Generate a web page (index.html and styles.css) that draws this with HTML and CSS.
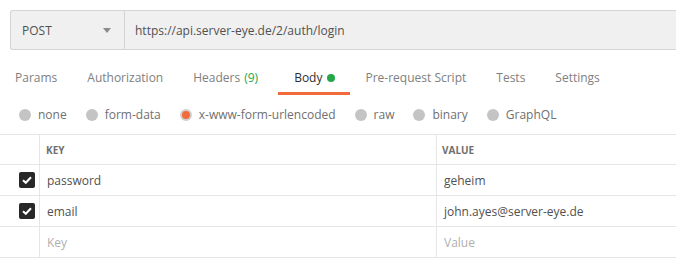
FILE: index.html
```
<!DOCTYPE html>
<html>
<head>
<meta charset="utf-8">
<link rel="stylesheet" href="styles.css">
</head>
<body>
<div class="page">
  <div class="urlbar">
    <div class="method">
      <span class="method-name">POST</span>
      <svg class="caret" width="8" height="5" viewBox="0 0 8 5"><path d="M0 0H8L4 5Z" fill="#8a8a8a"/></svg>
    </div>
    <div class="url">https://api.server-eye.de/2/auth/login</div>
  </div>

  <div class="tabs">
    <div class="tab">Params</div>
    <div class="tab">Authorization</div>
    <div class="tab">Headers <span class="count">(9)</span></div>
    <div class="tab active">Body <span class="dot"></span></div>
    <div class="tab">Pre-request Script</div>
    <div class="tab">Tests</div>
    <div class="tab">Settings</div>
  </div>

  <div class="radios">
    <div class="radio"><span class="circle"></span>none</div>
    <div class="radio"><span class="circle"></span>form-data</div>
    <div class="radio"><span class="circle checked"></span>x-www-form-urlencoded</div>
    <div class="radio"><span class="circle"></span>raw</div>
    <div class="radio"><span class="circle"></span>binary</div>
    <div class="radio"><span class="circle"></span>GraphQL</div>
  </div>

  <div class="table">
    <div class="row head">
      <div class="c-check"></div>
      <div class="c-key">KEY</div>
      <div class="c-val">VALUE</div>
    </div>
    <div class="row">
      <div class="c-check"><span class="cb"><svg width="10" height="8" viewBox="0 0 10 8"><path d="M1 4.2L3.8 6.8L9 1.2" fill="none" stroke="#fff" stroke-width="2"/></svg></span></div>
      <div class="c-key">password</div>
      <div class="c-val">geheim</div>
    </div>
    <div class="row">
      <div class="c-check"><span class="cb"><svg width="10" height="8" viewBox="0 0 10 8"><path d="M1 4.2L3.8 6.8L9 1.2" fill="none" stroke="#fff" stroke-width="2"/></svg></span></div>
      <div class="c-key">email</div>
      <div class="c-val">john.ayes@server-eye.de</div>
    </div>
    <div class="row">
      <div class="c-check"></div>
      <div class="c-key ph">Key</div>
      <div class="c-val ph">Value</div>
    </div>
  </div>
</div>
</body>
</html>
```
FILE: styles.css
```
html, body {
  margin: 0;
  padding: 0;
  background: #fff;
  overflow: hidden;
}
body {
  font-family: "Open Sans", "Liberation Sans", sans-serif;
  font-size: 12px;
  color: #505050;
}
.page {
  width: 676px;
}
.urlbar {
  display: flex;
  margin: 10px -20px 0 10px;
  height: 38px;
  border: 1px solid #d4d4d4;
  border-right: none;
  border-radius: 3px 0 0 3px;
  background: #f0f0f0;
}
.method {
  width: 114px;
  flex: none;
  display: flex;
  align-items: center;
  justify-content: space-between;
  padding: 0 13px 0 11px;
  box-sizing: border-box;
  border-right: 1px solid #d4d4d4;
  color: #505050;
}
.method-name {
  font-size: 12px;
}
.url {
  display: flex;
  align-items: center;
  padding-left: 10px;
  color: #505050;
}
.tabs {
  display: flex;
  margin-top: 12px;
  height: 33px;
}
.tab {
  padding: 0 15px;
  display: flex;
  align-items: center;
  color: #808080;
  border-bottom: 3px solid transparent;
  box-sizing: border-box;
  height: 33px;
  padding-top: 1px;
}
.tab.active {
  color: #303030;
  border-bottom-color: #f26b3a;
  padding-left: 16px;
}
.count {
  color: #26a74a;
  margin-left: 4px;
  margin-right: 5px;
}
.dot {
  width: 8px;
  height: 8px;
  border-radius: 50%;
  background: #26a74a;
  margin-left: 5px;
}
.radios {
  display: flex;
  height: 39px;
  align-items: center;
  padding-left: 19px;
  gap: 19px;
}
.radio {
  display: flex;
  align-items: center;
  color: #707070;
}
.circle {
  width: 12px;
  height: 12px;
  border-radius: 50%;
  background: #c4c4c4;
  margin-right: 7px;
  box-sizing: border-box;
}
.circle.checked {
  background: #f26b3a;
  border: 2px solid #d0d0d0;
}
.table {
  border-top: 1px solid #e6e6e6;
}
.row {
  display: flex;
  height: 31px;
  border-bottom: 1px solid #e6e6e6;
  box-sizing: border-box;
}
.c-check {
  width: 40px;
  flex: none;
  border-right: 1px solid #e6e6e6;
  display: flex;
  align-items: center;
  justify-content: flex-end;
  padding-right: 4px;
  box-sizing: border-box;
}
.c-key {
  width: 397px;
  flex: none;
  border-right: 1px solid #e6e6e6;
  display: flex;
  align-items: center;
  padding-left: 7px;
  box-sizing: border-box;
}
.c-val {
  flex: 1;
  display: flex;
  align-items: center;
  padding-left: 7px;
}
.head {
  height: 30px;
}
.head .c-key, .head .c-val {
  font-size: 10px;
  font-weight: 700;
  color: #707070;
  padding-left: 6px;
}
.head .c-val {
  padding-left: 5px;
}
.cb {
  width: 16px;
  height: 16px;
  border-radius: 2px;
  background: #282828;
  display: flex;
  align-items: center;
  justify-content: center;
}
.ph {
  color: #b0b0b0;
}
```
